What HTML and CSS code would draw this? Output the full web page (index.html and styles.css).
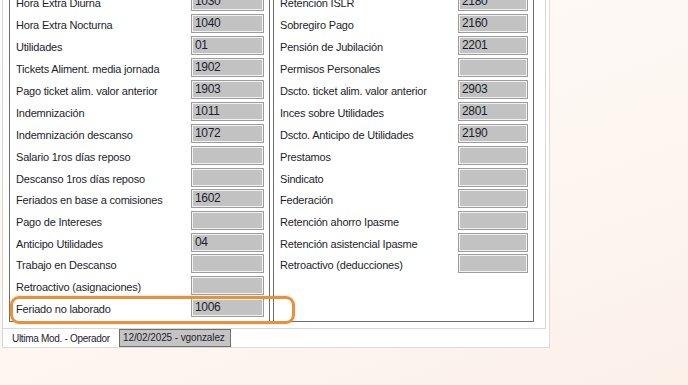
FILE: index.html
```html
<!DOCTYPE html>
<html lang="es">
<head>
    <meta charset="UTF-8">
    <title>Conceptos</title>
    <link rel="stylesheet" href="styles.css">
</head>
<body>
    <div class="window">
        <div class="panel">
            <div class="groups">
                <div class="group left">
                    <div class="row"><span>Hora Extra Diurna</span><div class="field">1030</div></div>
                    <div class="row"><span>Hora Extra Nocturna</span><div class="field">1040</div></div>
                    <div class="row"><span>Utilidades</span><div class="field">01</div></div>
                    <div class="row"><span>Tickets Aliment. media jornada</span><div class="field">1902</div></div>
                    <div class="row"><span>Pago ticket alim. valor anterior</span><div class="field">1903</div></div>
                    <div class="row"><span>Indemnización</span><div class="field">1011</div></div>
                    <div class="row"><span>Indemnización descanso</span><div class="field">1072</div></div>
                    <div class="row"><span>Salario 1ros días reposo</span><div class="field"></div></div>
                    <div class="row"><span>Descanso 1ros días reposo</span><div class="field"></div></div>
                    <div class="row"><span>Feriados en base a comisiones</span><div class="field">1602</div></div>
                    <div class="row"><span>Pago de Intereses</span><div class="field"></div></div>
                    <div class="row"><span>Anticipo Utilidades</span><div class="field">04</div></div>
                    <div class="row"><span>Trabajo en Descanso</span><div class="field"></div></div>
                    <div class="row"><span>Retroactivo (asignaciones)</span><div class="field"></div></div>
                    <div class="row"><span>Feriado no laborado</span><div class="field">1006</div></div>
                </div>
                <div class="group right">
                    <div class="row"><span>Retención ISLR</span><div class="field">2180</div></div>
                    <div class="row"><span>Sobregiro Pago</span><div class="field">2160</div></div>
                    <div class="row"><span>Pensión de Jubilación</span><div class="field">2201</div></div>
                    <div class="row"><span>Permisos Personales</span><div class="field"></div></div>
                    <div class="row"><span>Dscto. ticket alim. valor anterior</span><div class="field">2903</div></div>
                    <div class="row"><span>Inces sobre Utilidades</span><div class="field">2801</div></div>
                    <div class="row"><span>Dscto. Anticipo de Utilidades</span><div class="field">2190</div></div>
                    <div class="row"><span>Prestamos</span><div class="field"></div></div>
                    <div class="row"><span>Sindicato</span><div class="field"></div></div>
                    <div class="row"><span>Federación</span><div class="field"></div></div>
                    <div class="row"><span>Retención ahorro Ipasme</span><div class="field"></div></div>
                    <div class="row"><span>Retención asistencial Ipasme</span><div class="field"></div></div>
                    <div class="row"><span>Retroactivo (deducciones)</span><div class="field"></div></div>
                </div>
            </div>
        </div>
        <div class="footer">
            <span class="footer-label">Ultima Mod. - Operador</span>
            <div class="footer-field">12/02/2025 - vgonzalez</div>
        </div>
    </div>
    <div class="highlight"></div>
</body>
</html>
```

FILE: styles.css
```css
body {
    margin: 0;
    height: 385px;
    overflow: hidden;
    font-family: "Liberation Sans", Arial, sans-serif;
    font-size: 11px;
    color: #1d1d2b;
    background: linear-gradient(160deg, #fefcfa 0%, #fdf6f1 60%, #fcf0e9 100%);
    position: relative;
}
.window {
    margin-left: 2px;
    width: 548px;
    height: 348px;
    background: white;
    border-left: 1px solid #d4d4d4;
    border-right: 1px solid #dcdcdc;
    border-bottom: 1px solid #dcdcdc;
    box-sizing: border-box;
    overflow: hidden;
}
.panel {
    width: 543px;
    height: 329px;
    border-right: 1px solid #d8d8d8;
    border-bottom: 1px solid #d8d8d8;
    box-sizing: border-box;
    overflow: hidden;
}
.groups {
    display: flex;
    gap: 3px;
    margin-left: 6px;
    margin-top: -14px;
}
.group {
    border: 1px solid #6c6c6c;
    box-sizing: border-box;
    padding: 5px 5px 3px 6px;
    height: 336px;
    display: flex;
    flex-direction: column;
}
.group.left {
    width: 261px;
}
.group.right {
    width: 261px;
}
.row {
    height: 22px;
    flex-shrink: 0;
    display: flex;
    align-items: flex-start;
    justify-content: space-between;
    letter-spacing: -0.2px;
}
.row:nth-child(n+8) {
    height: 21.7px;
}
.row span {
    line-height: 19px;
    padding-top: 2px;
}
.field {
    height: 19px;
    box-sizing: border-box;
    border: 1px solid #9c9c9c;
    box-shadow: inset 0 0 0 1px #f2f2f2;
    background: #c2c2c2;
    padding: 0 3px;
    line-height: 17px;
    font-size: 12px;
    letter-spacing: -0.3px;
}
.left .field {
    width: 73px;
}
.right .field {
    width: 70px;
}
.footer {
    display: flex;
    align-items: center;
    height: 18px;
    padding-left: 9px;
    font-size: 10px;
}
.footer-label {
    width: 107px;
    letter-spacing: -0.3px;
}
.footer-field {
    width: 112px;
    height: 18px;
    box-sizing: border-box;
    border: 1px solid #6e6e6e;
    background: #c4c4c4;
    padding-left: 3px;
    line-height: 16px;
    font-size: 10px;
    letter-spacing: -0.1px;
    white-space: nowrap;
    overflow: hidden;
}
.highlight {
    position: absolute;
    left: 10px;
    top: 296px;
    width: 285px;
    height: 28px;
    box-sizing: border-box;
    border: 3px solid #e8913d;
    border-radius: 9px;
    box-shadow: 0 0 2px rgba(232, 145, 61, 0.5);
}
```
